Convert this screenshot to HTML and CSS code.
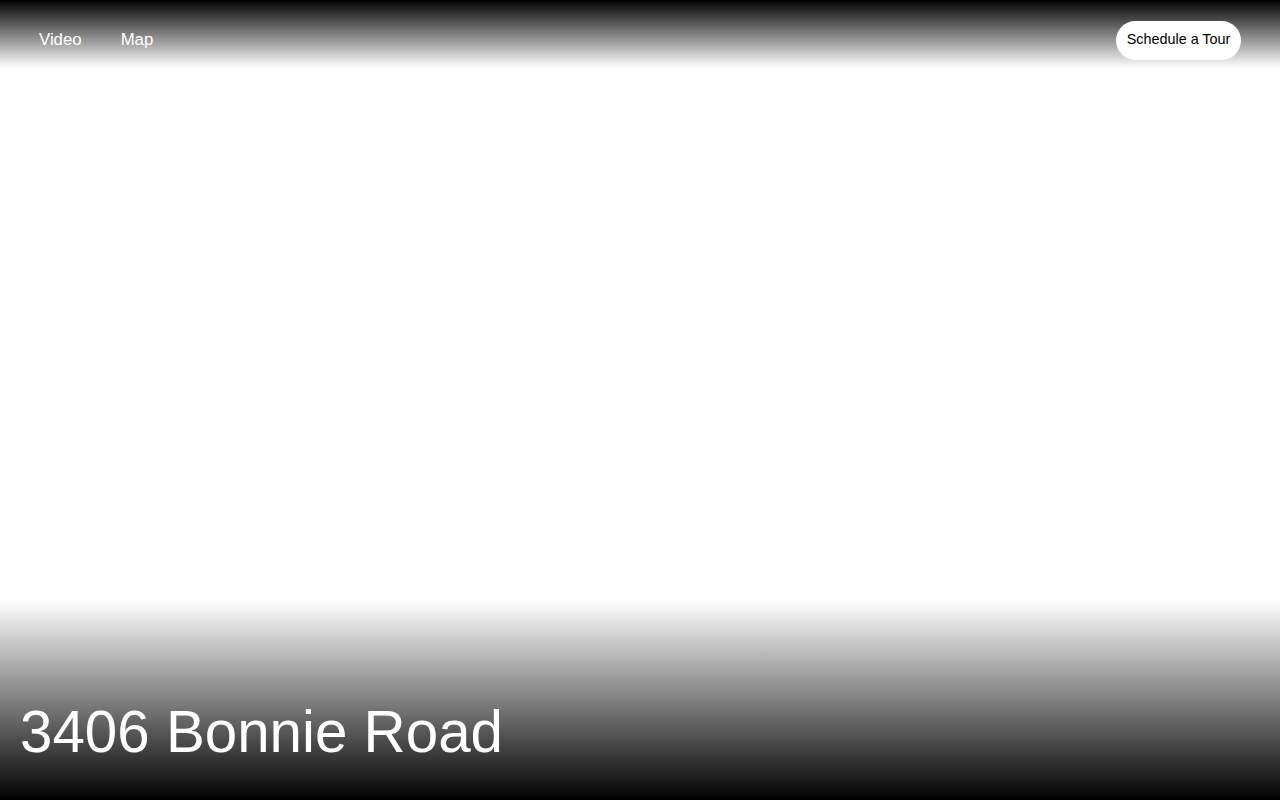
FILE: index.html
```html
<!DOCTYPE html>
<html lang="en">
<head>
<meta charset="utf-8">
<title>3406 Bonnie Road</title>
<link rel="stylesheet" href="styles.css">
</head>
<body>
<div class="page">
  <header class="topbar">
    <nav class="nav">
      <a class="nav-link" href="#">Video</a>
      <a class="nav-link" href="#">Map</a>
    </nav>
    <a class="tour-btn" href="#">Schedule a Tour</a>
  </header>
  <main class="hero"></main>
  <footer class="caption">
    <h1 class="title">3406 Bonnie Road</h1>
  </footer>
</div>
</body>
</html>
```
FILE: styles.css
```css
html, body {
  margin: 0;
  padding: 0;
  height: 100%;
  background: #ffffff;
  font-family: "Liberation Sans", Arial, sans-serif;
}

.page {
  display: flex;
  flex-direction: column;
  height: 100vh;
}

.topbar {
  display: flex;
  align-items: center;
  justify-content: space-between;
  height: 68px;
  padding: 0 39px;
  padding-top: 12px;
  box-sizing: border-box;
  background: linear-gradient(to bottom, #000 0%, rgba(0,0,0,0) 100%);
}

.nav {
  display: flex;
  gap: 39px;
  align-self: flex-start;
  padding-top: 18px;
}

.nav-link {
  color: #ffffff;
  text-decoration: none;
  font-size: 16.8px;
  line-height: 20px;
}

.tour-btn {
  align-self: flex-start;
  margin-top: 9px;
  display: flex;
  align-items: center;
  height: 39px;
  padding: 0 10px 3px 10px;
  width: 125px;
  justify-content: center;
  box-sizing: border-box;
  border-radius: 20px;
  background: #ffffff;
  color: #000000;
  text-decoration: none;
  font-size: 14.4px;
  white-space: nowrap;
}

.hero {
  flex: 1;
}

.caption {
  height: 200px;
  display: flex;
  flex-direction: column;
  justify-content: flex-end;
  padding: 0 20px 35px;
  box-sizing: border-box;
  background: linear-gradient(to bottom, rgba(0,0,0,0) 0%, #000 100%);
}

.title {
  margin: 0;
  color: #ffffff;
  font-weight: 400;
  font-size: 58.3px;
  line-height: 66px;
}
```
